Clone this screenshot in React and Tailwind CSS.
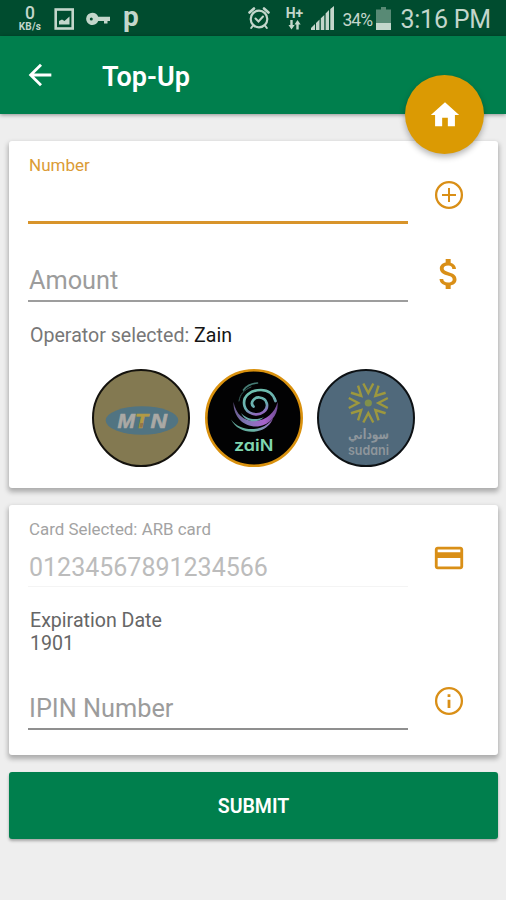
import { useState } from "react";
import { MdArrowBack, MdAttachMoney, MdCreditCard, MdHome } from "react-icons/md";

function StatusBar() {
  return (
    <div className="flex h-9 items-center bg-[#004c2f] text-[#c3d6cb]">
      <div className="mt-[1px] ml-[17px] flex w-[26px] flex-col items-center">
        <span className="h-[17px] text-[17.500px] leading-[17px] font-medium">0</span>
        <span className="h-[10px] text-[10px] leading-[10px] font-bold tracking-[0.2px]">KB/s</span>
      </div>
      <svg className="mt-[2px] ml-[11px] h-[22px] w-[21px]" viewBox="0 0 21 22" fill="none">
        <rect x="1.7" y="1.5" width="17" height="19" stroke="currentColor" strokeWidth="2.6" />
        <path d="M5 16.500V13l3-1.500 2.500 1.500 5-4.500v8z" fill="currentColor" />
      </svg>
      <svg className="mt-[2px] ml-[11px] h-[14px] w-6" viewBox="0 0 24 14">
        <path
          fill="currentColor"
          fillRule="evenodd"
          d="M6.300.7a6.200 6.200 0 1 0 5.900 8.300H18v2.500h3.500V9H24V4.800H12.200A6.300 6.300 0 0 0 6.300.7zM5.300 5.500a1.500 1.500 0 1 1 0 3 1.500 1.500 0 0 1 0-3z"
        />
      </svg>
      <span className="ml-[13px] h-[30px] text-[28px] leading-[28px] font-bold">p</span>

      <svg className="ml-auto h-6 w-[22px]" viewBox="0 0 22 24" fill="none" stroke="currentColor" strokeLinecap="round">
        <circle cx="11" cy="13" r="8.300" strokeWidth="2.200" />
        <path d="M7.500 12.500l3 3 4.500-5" strokeWidth="2" />
        <path d="M1.500 6.500l4.500-4M20.500 6.500L16 2.500" strokeWidth="2.600" />
        <path d="M5 19.500l-1.800 2.500M17 19.500l1.800 2.500" strokeWidth="2" />
      </svg>
      <div className="ml-[15px] flex w-[18px] flex-col items-center">
        <span className="text-[14px] leading-[13px] font-bold">H+</span>
        <svg className="h-[10px] w-[13px]" viewBox="0 0 13 10" fill="currentColor">
          <path d="M2.300 0h2.400v5h2L3.500 9.500.5 5h1.800zM8.300 9.500h2.400v-5h2L9.500 0l-3 4.500h1.800z" />
        </svg>
      </div>
      <svg className="ml-[8px] h-6 w-[23px]" viewBox="0 0 23 24" fill="currentColor">
        <path d="M0 24v-2l4-4v6zM5 24v-7l3.500-3.500V24zM9.800 24V12.300l3.500-3.400V24zM14.600 24V7.500L18 4v20zM19.300 24V3L23 0v24z" />
      </svg>
      <span className="mt-[3px] ml-[8px] w-[31px] text-[17.500px] leading-6 tracking-[-0.9px] whitespace-nowrap">34%</span>
      <svg className="ml-[3px] h-[23px] w-[15px]" viewBox="0 0 15 23" fill="currentColor">
        <path d="M5 0h5v2.500h5V16H0V2.500h5z" opacity="0.45" />
        <path d="M0 16h15v7H0z" />
      </svg>
      <span className="mt-[4px] mr-[15px] ml-[9px] text-[25px] leading-8 tracking-[-0.2px] whitespace-nowrap">3:16 PM</span>
    </div>
  );
}

function CircleIcon({ children, className }) {
  return (
    <svg className={`size-[34px] text-[#d98f17] ${className}`} viewBox="0 0 34 34" fill="none" stroke="currentColor">
      <circle cx="17" cy="17" r="12.900" strokeWidth="2.300" />
      {children}
    </svg>
  );
}

function MtnLogo() {
  return (
    <svg className="h-full w-full" viewBox="0 0 98 98">
      <circle cx="49" cy="49" r="48" fill="#837951" stroke="#14120d" strokeWidth="2" />
      <ellipse cx="50" cy="51.500" rx="36.300" ry="14.300" fill="#517482" />
      <g fontFamily="Liberation Sans, sans-serif" fontSize="20" fontWeight="700" fontStyle="italic" strokeWidth="0.6">
        <text x="25.500" y="58.500" fill="#aaa9a5" stroke="#aaa9a5" textLength="17.500" lengthAdjust="spacingAndGlyphs">M</text>
        <text x="43" y="58.500" fill="#b29a45" stroke="#b29a45" textLength="13" lengthAdjust="spacingAndGlyphs">T</text>
        <text x="58.500" y="58.500" fill="#aaa9a5" stroke="#aaa9a5" textLength="16.500" lengthAdjust="spacingAndGlyphs">N</text>
      </g>
      <path d="M48.300 54h3l-1 4.500h-3z" fill="#94764a" />
    </svg>
  );
}

function ZainLogo() {
  return (
    <svg className="h-full w-full" viewBox="0 0 98 98">
      <defs>
        <linearGradient id="swirl" x1="0" y1="0" x2="0.400" y2="1">
          <stop offset="0" stopColor="#6fc4ae" />
          <stop offset="0.700" stopColor="#6aaeb0" />
          <stop offset="1" stopColor="#8f68bd" />
        </linearGradient>
        <linearGradient id="tail" x1="0" y1="0" x2="1" y2="0">
          <stop offset="0" stopColor="#6a5a8e" />
          <stop offset="0.300" stopColor="#7f78b5" />
          <stop offset="0.700" stopColor="#a762cc" />
          <stop offset="1" stopColor="#6e4c92" />
        </linearGradient>
        <linearGradient id="base" x1="0" y1="0" x2="1" y2="0">
          <stop offset="0" stopColor="#5fa598" />
          <stop offset="0.550" stopColor="#69b5a5" />
          <stop offset="1" stopColor="#9b60c2" />
        </linearGradient>
      </defs>
      <circle cx="49" cy="49" r="47.700" fill="#020203" stroke="#d9910e" strokeWidth="2.600" />
      <path
        d="M48.500 37.500C44.500 34 49 28 54.500 28.500c8 .7 10 10 4 14.500-6 4.500-17 2-19-6C37 27 46 21 56 21c6 0 12 3 14.500 11"
        fill="none"
        stroke="url(#swirl)"
        strokeWidth="2.700"
        strokeLinecap="round"
      />
      <path d="M28.500 33C31 46 40 53 51 52c10-1 19-8 21.500-19C74 45 66 56 53 57.500 39 58.500 28 48 28.500 33z" fill="url(#tail)" />
      <path d="M36 44c5 6 15 8 23 4-6 6.500-18 6-23-4z" fill="#69a9ab" />
      <path d="M26 50.500C33 60 46 62 56 58.500c5-1.800 9-5 12-9-2.500 6-7 10-13 12-11 3.500-24-.5-29-11z" fill="url(#base)" />
      <path d="M38.500 21c3-4 8-6.500 14-7" fill="none" stroke="#467d75" strokeWidth="1.700" strokeLinecap="round" />
      <path d="M46 18c-7 3-11 7-12 14" fill="none" stroke="#35605a" strokeWidth="1" strokeLinecap="round" />
      <text
        x="29"
        y="81.500"
        fill="#80d6b1"
        className="[font-feature-settings:'cv11']"
        fontFamily="Inter, sans-serif"
        fontSize="16.500"
        fontWeight="600"
        textLength="39.500"
        lengthAdjust="spacingAndGlyphs"
      >
        zaiN
      </text>
    </svg>
  );
}

const rays = [0, 45, 90, 135, 180, 225, 270, 315];

function SudaniLogo() {
  return (
    <svg className="h-full w-full" viewBox="0 0 98 98">
      <circle cx="49" cy="49" r="48" fill="#50697b" stroke="#0d1114" strokeWidth="2" />
      <g fill="none" stroke="#9d983e" strokeWidth="2.400">
        {rays.map((angle) => (
          <path key={angle} d="M46.300 14.500l5 9.500 5-9.500" transform={`rotate(${angle} 51.300 34)`} />
        ))}
      </g>
      <circle cx="51.300" cy="34" r="3.600" fill="#81914a" />
      <g fill="#8e969c" textAnchor="middle">
        <text x="51.500" y="70" fontFamily="DejaVu Sans, sans-serif" fontSize="14" fontWeight="700" textLength="41" lengthAdjust="spacingAndGlyphs">
          سوداني
        </text>
        <text
          x="51.500"
          y="85.500"
          className="[font-feature-settings:'cv11']"
          fontFamily="Inter, sans-serif"
          fontSize="13.500"
          fontWeight="600"
          textLength="41"
          lengthAdjust="spacingAndGlyphs"
        >
          sudani
        </text>
      </g>
    </svg>
  );
}

const operators = [
  { name: "MTN", Logo: MtnLogo },
  { name: "Zain", Logo: ZainLogo },
  { name: "Sudani", Logo: SudaniLogo },
];

function Card({ children, className }) {
  return (
    <section className={`rounded-[3px] bg-white pl-[19px] shadow-[0_3px_5px_1px_rgba(0,0,0,0.28)] ${className}`}>
      {children}
    </section>
  );
}

export default function App() {
  const [operator, setOperator] = useState("Zain");

  return (
    <div className="relative h-[900px] w-[506px] overflow-hidden bg-[#eeeeee] font-[Roboto,sans-serif]">
      <StatusBar />
      <header className="flex h-[78px] items-center bg-[#007f4d] text-white shadow-[0_1px_4px_rgba(0,0,0,0.4)]">
        <button type="button" className="ml-[23px]">
          <MdArrowBack className="size-[34px]" />
        </button>
        <h1 className="mt-[3px] ml-[45px] text-[27px] leading-8 font-semibold">Top-Up</h1>
      </header>
      <button
        type="button"
        className="absolute top-[75px] left-[405px] flex size-[79px] items-center justify-center rounded-full bg-[#db9a03] text-white shadow-[0_3px_6px_rgba(0,0,0,0.3)]"
      >
        <MdHome className="size-[34px]" />
      </button>

      <main className="mt-[27px] mr-2 ml-[9px]">
        <Card className="h-[347px]">
          <div className="flex h-[83px]">
            <div className="w-[380px] border-b-[3px] border-[#d8942a] pt-[14px]">
              <label className="block pl-px text-[17px] leading-5 text-[#db9b36]">Number</label>
            </div>
            <CircleIcon className="mt-[37px] ml-6">
              <path d="M17 10v14M10 17h14" strokeWidth="2" />
            </CircleIcon>
          </div>
          <div className="flex h-[78px]">
            <div className="flex w-[380px] items-end border-b-2 border-[#9d9d9d] pb-[4px] pl-px">
              <span className="text-[25.300px] leading-[30px] text-[#9c9c9c]">Amount</span>
            </div>
            <MdAttachMoney className="mt-[30px] ml-[21px] size-[40px] text-[#d98f17]" />
          </div>
          <p className="mt-[22px] pl-[2px] text-[19.600px] leading-6 text-[#777777]">
            Operator selected: <span className="text-[#151515]">{operator}</span>
          </p>
          <div className="mt-[20.500px] flex gap-[14.500px] pl-16">
            {operators.map(({ name, Logo }) => (
              <button key={name} type="button" className="size-[98px]" onClick={() => setOperator(name)}>
                <Logo />
              </button>
            ))}
          </div>
        </Card>

        <Card className="mt-[17px] h-[250px]">
          <div className="flex h-[82px]">
            <div className="w-[380px] border-b border-[#f4f4f4] pt-[14px] pl-px">
              <div className="text-[16.900px] leading-5 text-[#a3a3a3]">Card Selected: ARB card</div>
              <div className="mt-[14px] text-[25px] leading-[30px] text-[#bcbcbc]">01234567891234566</div>
            </div>
            <MdCreditCard className="mt-[36px] ml-6 size-[34px] text-[#d98f17]" />
          </div>
          <div className="mt-[22px] pl-[2px] text-[19.600px] leading-[23px] text-[#666666]">
            <div>Expiration Date</div>
            <div>1901</div>
          </div>
          <div className="flex h-[75px]">
            <div className="flex w-[380px] items-end border-b-2 border-[#8f8f8f] pb-[4px] pl-px">
              <span className="text-[25.300px] leading-[30px] text-[#9c9c9c]">IPIN Number</span>
            </div>
            <CircleIcon className="mt-[29px] ml-6">
              <path d="M17 15.700v8.300M17 10.200v2.800" strokeWidth="2.800" />
            </CircleIcon>
          </div>
        </Card>

        <button
          type="button"
          className="mt-[17px] h-[67px] w-full rounded-[3px] bg-[#007f4d] pt-[3px] text-[19.500px] font-semibold text-white shadow-[0_2px_3px_rgba(0,0,0,0.3)]"
        >
          SUBMIT
        </button>
      </main>
    </div>
  );
}
